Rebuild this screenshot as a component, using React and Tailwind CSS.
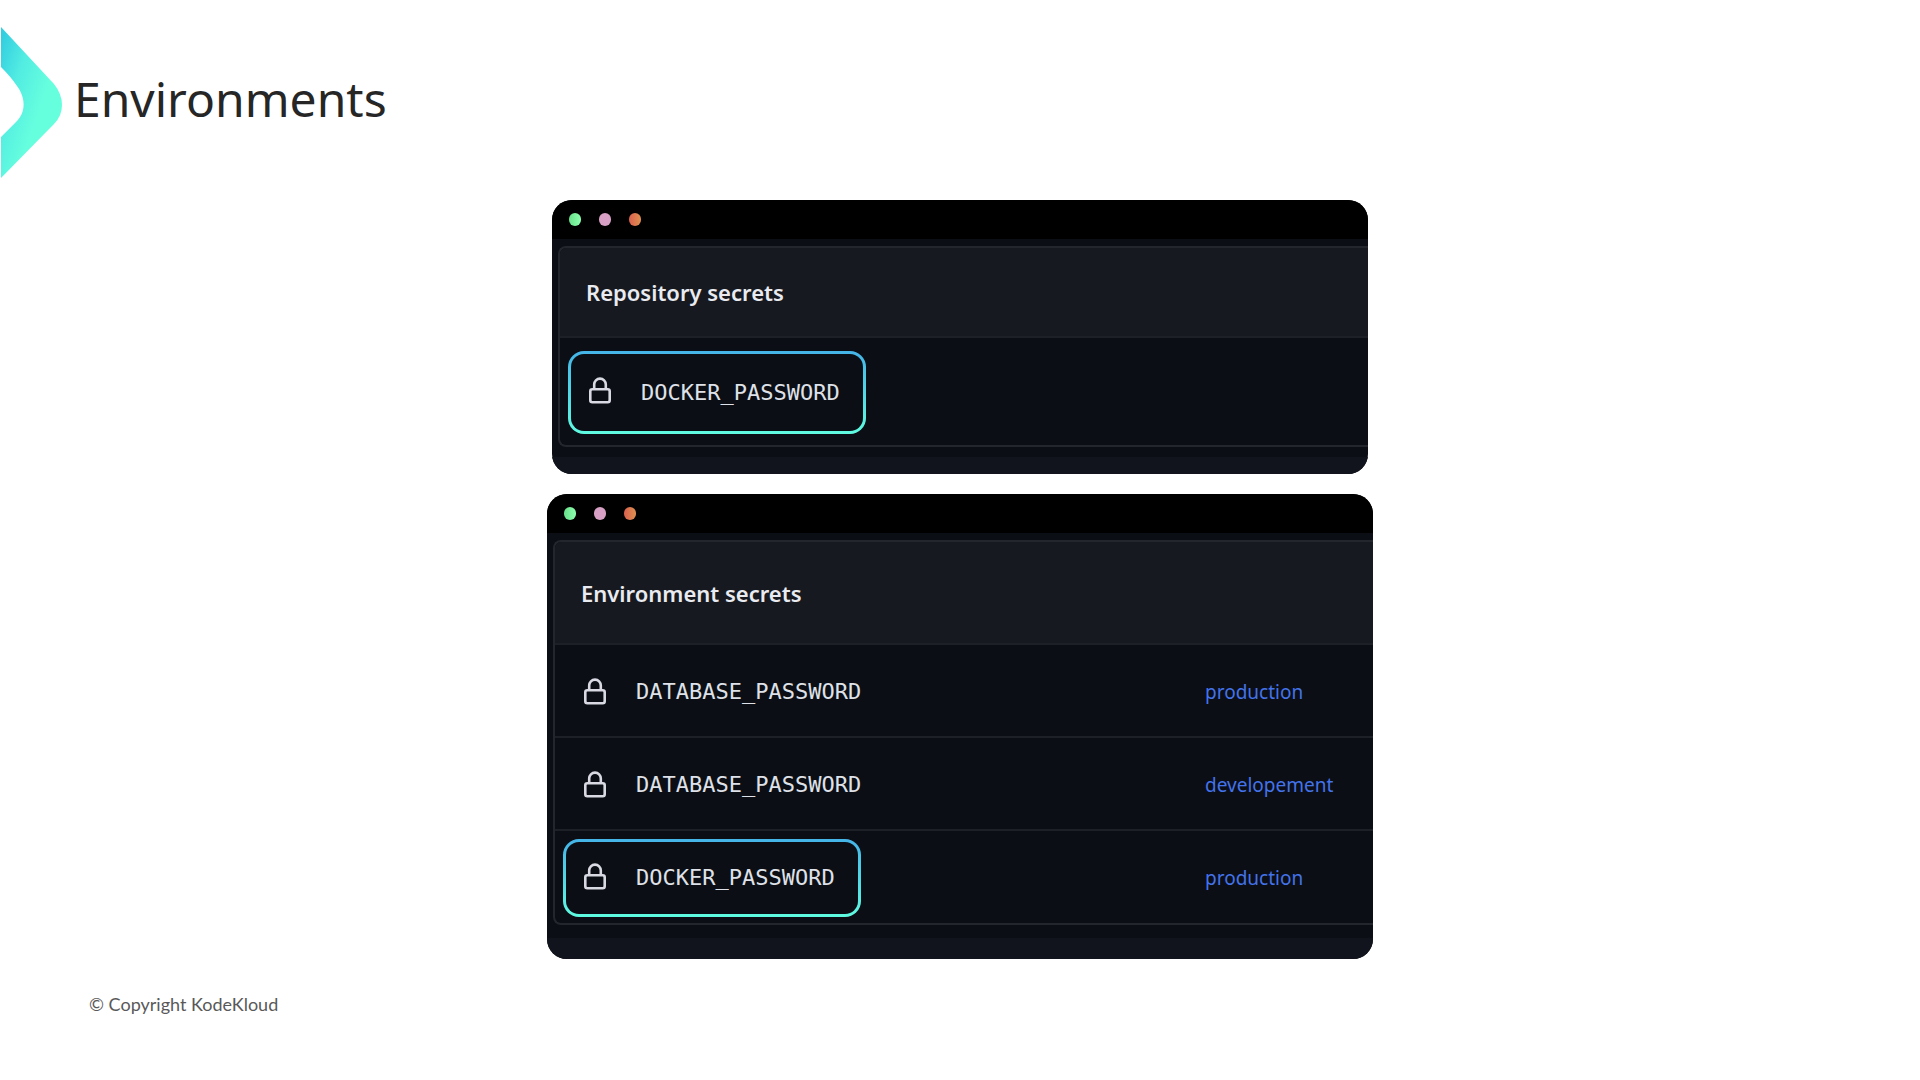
const repositorySecrets = [
  { name: "DOCKER_PASSWORD", highlighted: true }
]

const environmentSecrets = [
  { name: "DATABASE_PASSWORD", environment: "production" },
  { name: "DATABASE_PASSWORD", environment: "developement" },
  { name: "DOCKER_PASSWORD", environment: "production", highlighted: true }
]

function LockIcon({ className }) {
  return (
    <svg
      className={`w-[22px] h-[27px] shrink-0 ${className}`}
      viewBox="0 0 22 27"
      fill="none"
      stroke="#d8d9e2"
      strokeWidth={2.6}
      aria-hidden="true"
    >
      <rect x="1.3" y="12.2" width="19.4" height="13" rx="2" />
      <path d="M5.2 12V7.4a5.8 5.8 0 0 1 11.6 0V12" />
    </svg>
  )
}

function SecretName({ secret, boxClass }) {
  if (secret.highlighted) {
    return (
      <div className={`w-[298px] rounded-2xl bg-linear-to-b from-[#45b4e8] to-[#5ffbe0] p-[3px] ${boxClass}`}>
        <div className="flex h-full items-center gap-[30px] rounded-[13px] bg-[#0c0e15] pl-[18px]">
          <LockIcon className="mb-1" />
          <span>{secret.name}</span>
        </div>
      </div>
    )
  }

  return (
    <div className="flex items-center gap-[30px] pl-[21px]">
      <LockIcon className="" />
      <span>{secret.name}</span>
    </div>
  )
}

function SecretsWindow({ title, secrets, className, headerClass, rowClass, boxClass, footerClass }) {
  return (
    <section className={`w-full overflow-hidden rounded-[20px] bg-[#0c0e15] ${className}`}>
      {/* Title bar */}
      <div className="flex h-[39px] items-center gap-[18px] bg-black pl-[17px]">
        <span className="h-[13px] w-3 rounded-full bg-linear-to-r from-[#68e08a] to-[#8cffae]" />
        <span className="h-[13px] w-3 rounded-full bg-[#d8a0c4]" />
        <span className="h-[13px] w-3 rounded-full bg-linear-to-r from-[#d9604f] to-[#dd9050]" />
      </div>

      {/* Secrets panel */}
      <div className="mt-[7px] ml-1.5 overflow-hidden rounded-l-lg border-y-2 border-l-2 border-[#24262e]">
        <div className={`flex items-center bg-[#171920] pl-[26px] ${headerClass}`}>
          <h2 className="font-['Noto_Sans'] text-[22px] leading-8 font-semibold text-[#e9ebf0]">{title}</h2>
        </div>
        <table className="w-full">
          <tbody>
            {secrets.map((secret, index) => (
              <tr key={index} className={`border-t-2 border-[#1e2028] ${rowClass}`}>
                <td className="pt-0.5 pl-2 font-['DejaVu_Sans_Mono'] text-[22px] leading-7 text-[#dfe1e8]">
                  <SecretName secret={secret} boxClass={boxClass} />
                </td>
                {secret.environment && (
                  <td className="w-[168px] pt-0.5 font-['Noto_Sans'] text-[19px] leading-7">
                    <a href={`#${secret.environment}`} className="text-[#4373ea]">
                      {secret.environment}
                    </a>
                  </td>
                )}
              </tr>
            ))}
          </tbody>
        </table>
      </div>

      <div className={`bg-[#12141d] ${footerClass}`} />
    </section>
  )
}

export default function App() {
  return (
    <div className="min-h-screen bg-white pt-[27px]">
      {/* Slide heading */}
      <header className="flex items-start gap-3">
        <svg className="ml-px h-[151px] w-[61px] shrink-0" viewBox="0 0 61 151" aria-hidden="true">
          <defs>
            <linearGradient id="chevron" x1="0" y1="0.1" x2="0.6" y2="0.6">
              <stop offset="0" stopColor="#33cfe0" />
              <stop offset="0.45" stopColor="#52ece2" />
              <stop offset="1" stopColor="#66ffde" />
            </linearGradient>
          </defs>
          <path
            d="M0 0L53 57Q61 67 61 78T53 97L0 151V110L15 95C25 86 25 71 16 59Q10 50 0 40Z"
            fill="url(#chevron)"
          />
        </svg>
        <h1 className="mt-[42px] font-['Noto_Sans'] text-5xl leading-[60px] text-[#262626]">Environments</h1>
      </header>

      {/* Windows */}
      <main className="mt-[22px] flex flex-col items-center gap-5">
        <SecretsWindow
          title="Repository secrets"
          secrets={repositorySecrets}
          className="max-w-[816px]"
          headerClass="h-[88px]"
          rowClass="h-[108px]"
          boxClass="h-[83px]"
          footerClass="mt-[10px] h-[17px]"
        />
        <SecretsWindow
          title="Environment secrets"
          secrets={environmentSecrets}
          className="max-w-[826px]"
          headerClass="h-[101px]"
          rowClass="h-[93px]"
          boxClass="h-[78px]"
          footerClass="mt-[13px] h-[21px]"
        />
      </main>

      <footer className="mt-[29px] pl-[89px] font-['Lato'] text-lg leading-8 text-[#595959]">
        © Copyright KodeKloud
      </footer>
    </div>
  )
}
